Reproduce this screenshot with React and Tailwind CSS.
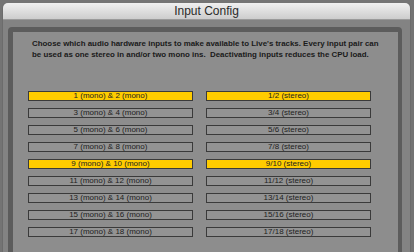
import React from "react";

const rows = [
  ["1 (mono) & 2 (mono)", "1/2 (stereo)", true],
  ["3 (mono) & 4 (mono)", "3/4 (stereo)", false],
  ["5 (mono) & 6 (mono)", "5/6 (stereo)", false],
  ["7 (mono) & 8 (mono)", "7/8 (stereo)", false],
  ["9 (mono) & 10 (mono)", "9/10 (stereo)", true],
  ["11 (mono) & 12 (mono)", "11/12 (stereo)", false],
  ["13 (mono) & 14 (mono)", "13/14 (stereo)", false],
  ["15 (mono) & 16 (mono)", "15/16 (stereo)", false],
  ["17 (mono) & 18 (mono)", "17/18 (stereo)", false],
];

function Toggle({ label, on }) {
  return (
    <div
      className={
        "h-[10px] border border-[#3a3a3a] flex items-center justify-center text-[8px] leading-none text-[#1e1e1e] " +
        (on ? "bg-[#ffcc00]" : "bg-[#939393]")
      }
    >
      {label}
    </div>
  );
}

export default function App() {
  return (
    <div
      className="w-[414px] h-[252px] overflow-hidden bg-[#747474] pt-[3px] pl-[2px] pr-[3px]"
      style={{ fontFamily: '"Liberation Sans", Arial, sans-serif' }}
    >
      <div className="h-full bg-[#838383] border-x-[1px] border-[#6c6c6c] rounded-t-[5px]">
        <div className="h-[17px] rounded-t-[5px] bg-gradient-to-b from-[#f0f0f0] to-[#cdcdcd] border-b border-[#9a9a9a] flex items-center justify-center text-[12px] text-[#2a2a2a]">
          Input Config
        </div>
        <div className="h-full pt-[7px] pl-[5px] pr-[8px]">
          <div className="h-full bg-[#5c5c5c] rounded-t-[4px] pt-[5px] pl-[5px] pr-[4px]">
            <div className="h-full bg-[#8d8d8d] pl-[15px] pr-[27px] pt-[6px]">
              <p className="pl-[4px] text-[7.9px] leading-[11px] font-bold text-[#1a1a1a] whitespace-nowrap">
                Choose which audio hardware inputs to make available to Live's tracks. Every input pair can
                <br />
                be used as one stereo in and/or two mono ins.&nbsp; Deactivating inputs reduces the CPU load.
              </p>
              <div className="mt-[31px] grid grid-cols-2 gap-x-[13px] gap-y-[7px]">
                {rows.map(([mono, stereo, on]) => (
                  <React.Fragment key={mono}>
                    <Toggle label={mono} on={on} />
                    <Toggle label={stereo} on={on} />
                  </React.Fragment>
                ))}
              </div>
            </div>
          </div>
        </div>
      </div>
    </div>
  );
}
